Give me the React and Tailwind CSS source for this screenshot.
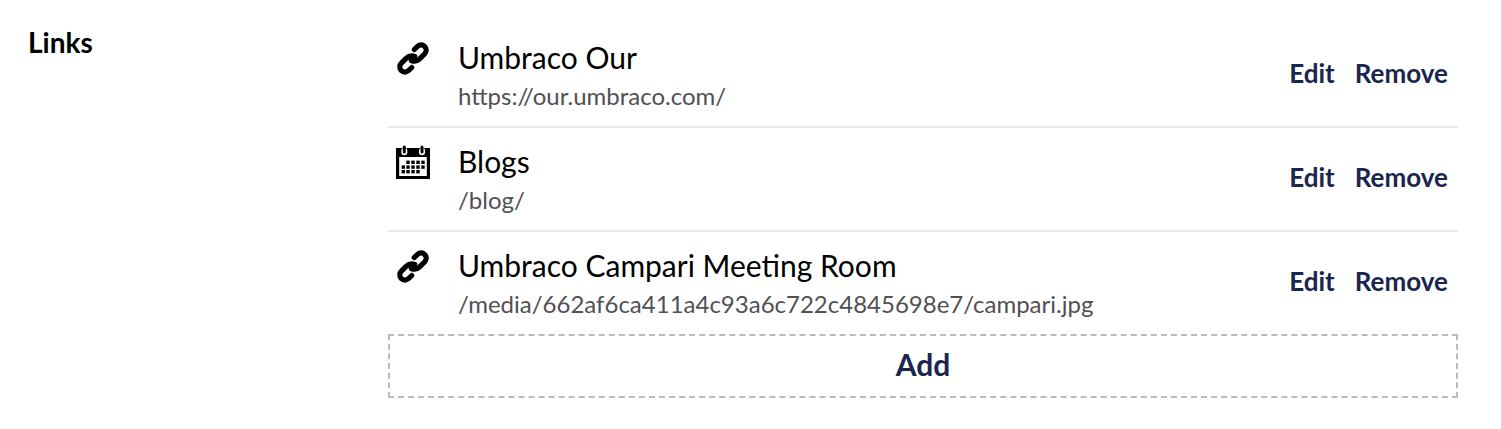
function LinkIcon() {
  return (
    <svg viewBox="0 0 36 36" className="size-9" fill="none" stroke="#000" strokeWidth="5.2" strokeLinecap="round" strokeLinejoin="round">
      <path d="M19.200 9.500L22 6.800C24.400 4.500 27.500 4.300 29.600 6.300C31.900 8.600 31.700 11.800 29.400 14.100L24.600 18.800C22.400 20.900 19 21.600 16.300 20.500" />
      <path d="M16.800 27.500L14 30.200C11.600 32.500 8.500 32.700 6.400 30.700C4.100 28.400 4.300 25.200 6.600 22.900L11.400 18.200C13.600 16.100 17 15.400 19.700 16.500" />
    </svg>
  );
}

const days = [
  [13, 18.3], [18, 18.3], [23, 18.3], [28, 18.3],
  [8.3, 23.1], [13, 23.1], [18, 23.1], [23, 23.1], [28, 23.1],
  [8.3, 27.7], [13, 27.7], [18, 27.7], [23, 27.7],
];

function CalendarIcon() {
  return (
    <svg viewBox="0 0 36 36" className="size-9">
      <path fill="#000" fillRule="evenodd" d="M1 4h34v31H1zM4.200 13v19h27.600V13z" />
      {[9.3, 27].map((x) => (
        <g key={x} fill="none" strokeLinecap="round">
          <path d={`M${x} 6.800v1.400`} stroke="#fff" strokeWidth="6" />
          <path d={`M${x} 3v4.900`} stroke="#000" strokeWidth="3" />
        </g>
      ))}
      {days.map(([x, y]) => (
        <rect key={`${x}-${y}`} x={x - 1.7} y={y - 1.7} width="3.4" height="3.4" />
      ))}
    </svg>
  );
}

const links = [
  { icon: LinkIcon, name: "Umbraco Our", url: "https://our.umbraco.com/" },
  { icon: CalendarIcon, name: "Blogs", url: "/blog/" },
  { icon: LinkIcon, name: "Umbraco Campari Meeting Room", url: "/media/662af6ca411a4c93a6c722c4845698e7/campari.jpg" },
];

export default function App() {
  return (
    <div className="flex h-[429px] w-[1501px] bg-white pt-6 pl-7 font-['Lato',sans-serif] text-black">
      <div className="w-[360px] shrink-0 text-[28px] leading-9 font-bold">Links</div>
      <div className="w-[1070px]">
        {links.map(({ icon: Icon, name, url }, i) => (
          <div key={name} className={i < 2 ? "flex h-[104px] border-b-2 border-[#e9e9eb]" : "flex h-[102px]"}>
            <div className="w-[70px] shrink-0 pt-4 pl-[7px]"><Icon /></div>
            <div className="flex-1 pt-[15px]">
              <div className="text-[30px] leading-9">{name}</div>
              <div className="pt-px text-[24px] leading-10 text-[#515054]">{url}</div>
            </div>
            <div className="flex items-center gap-5 pr-2.5 pb-[3px] text-[26px] font-bold text-[#1b264f]">
              <button>Edit</button>
              <button>Remove</button>
            </div>
          </div>
        ))}
        <button className="flex h-16 w-full items-center justify-center border-2 border-dashed border-[#bbbabf] pb-1 text-[30px] font-bold text-[#1b264f]">Add</button>
      </div>
    </div>
  );
}
